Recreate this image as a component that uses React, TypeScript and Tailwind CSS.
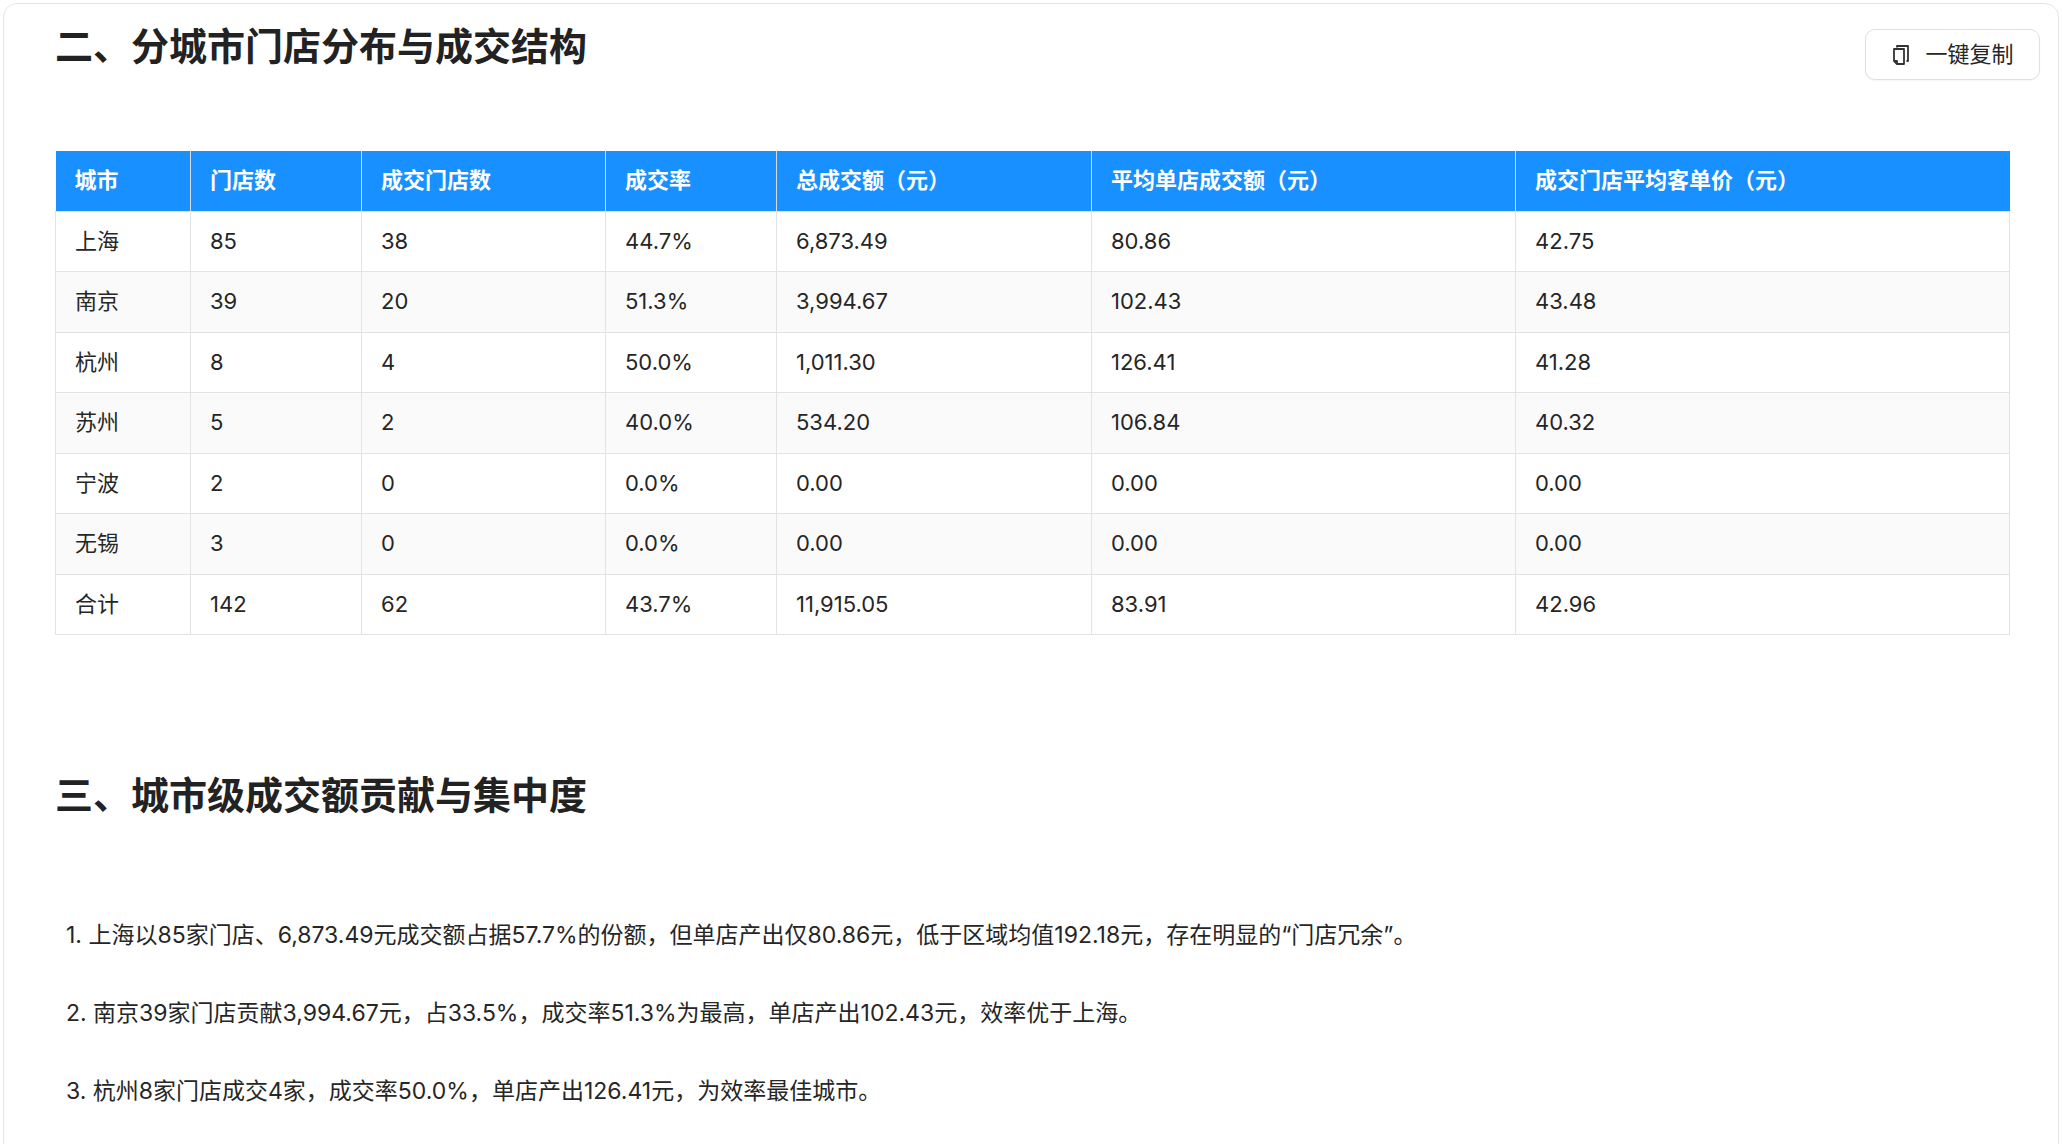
import React from 'react';

const headers = ['城市', '门店数', '成交门店数', '成交率', '总成交额（元）', '平均单店成交额（元）', '成交门店平均客单价（元）'];
const widths = ['w-[135px]', 'w-[171px]', 'w-[244px]', 'w-[171px]', 'w-[315px]', 'w-[424px]', ''];

const rows = [
  ['上海', '85', '38', '44.7%', '6,873.49', '80.86', '42.75'],
  ['南京', '39', '20', '51.3%', '3,994.67', '102.43', '43.48'],
  ['杭州', '8', '4', '50.0%', '1,011.30', '126.41', '41.28'],
  ['苏州', '5', '2', '40.0%', '534.20', '106.84', '40.32'],
  ['宁波', '2', '0', '0.0%', '0.00', '0.00', '0.00'],
  ['无锡', '3', '0', '0.0%', '0.00', '0.00', '0.00'],
  ['合计', '142', '62', '43.7%', '11,915.05', '83.91', '42.96'],
];

const notes = [
  '1. 上海以85家门店、6,873.49元成交额占据57.7%的份额，但单店产出仅80.86元，低于区域均值192.18元，存在明显的“门店冗余”。',
  '2. 南京39家门店贡献3,994.67元，占33.5%，成交率51.3%为最高，单店产出102.43元，效率优于上海。',
  '3. 杭州8家门店成交4家，成交率50.0%，单店产出126.41元，为效率最佳城市。',
];

const CopyIcon = () => (
  <svg width="20" height="22" viewBox="0 0 20 22" fill="none" stroke="#333" strokeWidth="1.8" strokeLinejoin="round">
    <path d="M6 3.5V2h11v15h-1.5" />
    <path d="M3 5h10v15H6l-3-3z" />
    <path d="M3 17h3v3" />
  </svg>
);

const App: React.FC = () => {
  return (
    <div className="w-[2062px] h-[1144px] bg-white pt-[3px] pl-[3px] pr-[3px] overflow-hidden" style={{ fontFamily: 'Inter, "Noto Sans CJK SC", sans-serif' }}>
      <div className="h-[1200px] border border-[#e5e5e5] rounded-[14px] text-[#262626]">
        <div className="flex justify-between items-start pl-[51px] pr-[18px]">
          <h2 className="text-[38px] font-bold leading-[44px] mt-[20px] text-[#222]">二、分城市门店分布与成交结构</h2>
          <button className="mt-[25px] h-[51px] w-[175px] flex items-center justify-center gap-[14px] border border-[#e0e0e0] rounded-[10px] bg-white text-[22px] text-[#262626] shadow-[0_1px_2px_rgba(0,0,0,0.04)]">
            <CopyIcon />
            一键复制
          </button>
        </div>

        <table className="ml-[51px] mt-[71px] w-[1955px] border-collapse text-[22px] table-fixed">
          <thead>
            <tr className="bg-[#1890ff] text-white h-[60px]">
              {headers.map((h, i) => (
                <th key={h} className={`${widths[i]} text-left font-bold px-[19px] border-l border-[#d9d9d9] first:border-l-0`}>{h}</th>
              ))}
            </tr>
          </thead>
          <tbody>
            {rows.map((r, ri) => (
              <tr key={r[0]} className={`h-[60.5px] ${ri % 2 === 1 ? 'bg-[#fafafa]' : 'bg-white'}`}>
                {r.map((c, ci) => (
                  <td key={ci} className="px-[19px] border border-[#e3e3e3] text-[#262626]">{c}</td>
                ))}
              </tr>
            ))}
          </tbody>
        </table>

        <h2 className="ml-[51px] mt-[138px] text-[38px] font-bold leading-[44px] text-[#222]">三、城市级成交额贡献与集中度</h2>

        <div className="ml-[62px] mt-[103px] flex flex-col gap-[48px] text-[23px] leading-[30px] text-[#262626]">
          {notes.map(n => (
            <p key={n}>{n}</p>
          ))}
        </div>
      </div>
    </div>
  );
};

export default App;
